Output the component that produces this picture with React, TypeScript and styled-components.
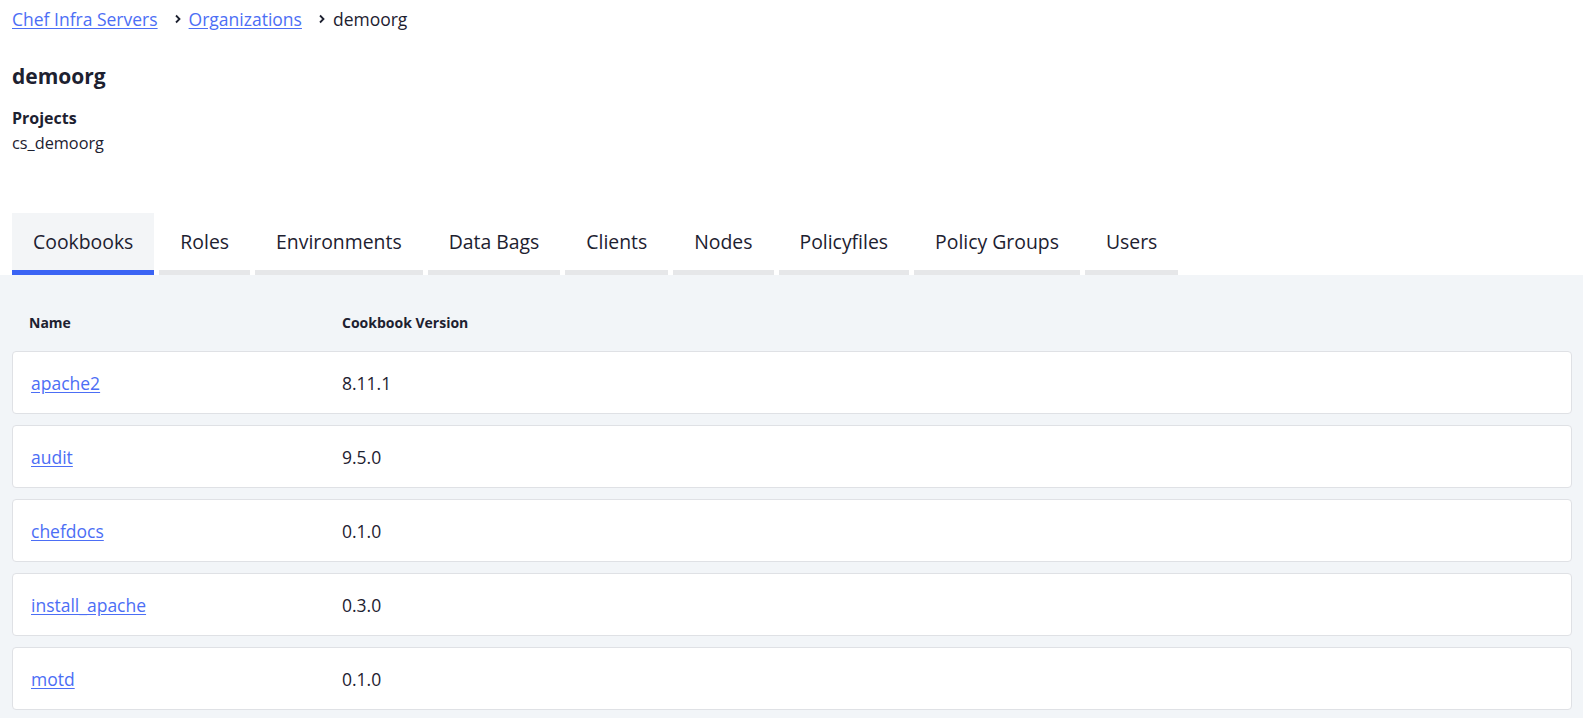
import React, { useState } from "react";
import styled, { createGlobalStyle } from "styled-components";

const GlobalStyle = createGlobalStyle`
    html, body {
        margin: 0;
        padding: 0;
        background: #ffffff;
        font-family: "Open Sans", Lato, "Liberation Sans", sans-serif;
        color: #1d2130;
    }
    * { box-sizing: border-box; }
`

const Page = styled.div`
    width: 100%;
    min-height: 718px;
    display: flex;
    flex-direction: column;
`
const Top = styled.div`
    padding: 8px 12px 0 12px;
`
const Breadcrumbs = styled.nav`
    display: flex;
    align-items: center;
    height: 22px;
    font-size: 17.5px;
`
const Crumb = styled.a`
    color: #4c6ef5;
    text-decoration: underline;
    text-underline-offset: 2px;
    cursor: pointer;
`
const Current = styled.span`
    color: #1d2130;
`
const Sep = styled.span`
    display: inline-flex;
    align-items: center;
    margin: 0 7px 0 16px;
    color: #1d2130;
`
const Title = styled.h1`
    margin: 32px 0 0 0;
    font-size: 21px;
    font-weight: 700;
    line-height: 28px;
`
const Label = styled.div`
    margin-top: 17px;
    font-size: 16px;
    font-weight: 700;
    line-height: 22px;
`
const Value = styled.div`
    margin-top: 4px;
    font-size: 16.3px;
    line-height: 21px;
`
const TabBar = styled.div`
    display: flex;
    gap: 5px;
    margin: 59px 0 0 12px;
`
const Tab = styled.button<{ $active?: boolean }>`
    height: 62px;
    padding: 0 21px;
    border: none;
    border-bottom: 5px solid ${p => p.$active ? "#3b64f4" : "#e6e7e9"};
    background: ${p => p.$active ? "#f3f5f7" : "#ffffff"};
    font-family: inherit;
    font-size: 19.4px;
    color: #1d2130;
    cursor: pointer;
`
const Panel = styled.div`
    flex: 1;
    background: #f2f5f8;
    padding: 19px 11px 12px 12px;
`
const HeadRow = styled.div`
    display: grid;
    grid-template-columns: 313px 1fr;
    align-items: end;
    height: 45px;
    padding: 0 17px 7px 17px;
    font-size: 14px;
    font-weight: 700;
`
const List = styled.div`
    display: flex;
    flex-direction: column;
    gap: 11px;
    margin-top: 12px;
`
const Row = styled.div`
    display: grid;
    grid-template-columns: 311px 1fr;
    align-items: center;
    height: 63px;
    padding: 0 18px;
    background: #ffffff;
    border: 1px solid #dfe1e5;
    border-radius: 4px;
    font-size: 17.5px;
`
const NameLink = styled.a`
    color: #4c6ef5;
    text-decoration: underline;
    text-underline-offset: 2px;
    cursor: pointer;
`

const Chevron = () => (
    <svg width="8" height="10" viewBox="0 0 8 10">
        <path d="M2 1.5 L5.5 5 L2 8.5" fill="none" stroke="#1d2130" strokeWidth="1.8" />
    </svg>
)

const tabs = ["Cookbooks", "Roles", "Environments", "Data Bags", "Clients", "Nodes", "Policyfiles", "Policy Groups", "Users"];

const cookbooks = [
    { name: "apache2", version: "8.11.1" },
    { name: "audit", version: "9.5.0" },
    { name: "chefdocs", version: "0.1.0" },
    { name: "install_apache", version: "0.3.0" },
    { name: "motd", version: "0.1.0" },
];

const App = () => {
    const [active, setActive] = useState("Cookbooks");

    return (
        <Page>
            <GlobalStyle />
            <Top>
                <Breadcrumbs>
                    <Crumb>Chef Infra Servers</Crumb>
                    <Sep><Chevron /></Sep>
                    <Crumb>Organizations</Crumb>
                    <Sep><Chevron /></Sep>
                    <Current>demoorg</Current>
                </Breadcrumbs>
                <Title>demoorg</Title>
                <Label>Projects</Label>
                <Value>cs_demoorg</Value>
            </Top>
            <TabBar>
                {tabs.map(t => (
                    <Tab key={t} $active={t === active} onClick={() => setActive(t)}>{t}</Tab>
                ))}
            </TabBar>
            <Panel>
                <HeadRow>
                    <div>Name</div>
                    <div>Cookbook Version</div>
                </HeadRow>
                <List>
                    {cookbooks.map(c => (
                        <Row key={c.name}>
                            <NameLink>{c.name}</NameLink>
                            <div>{c.version}</div>
                        </Row>
                    ))}
                </List>
            </Panel>
        </Page>
    )
}

export default App;
